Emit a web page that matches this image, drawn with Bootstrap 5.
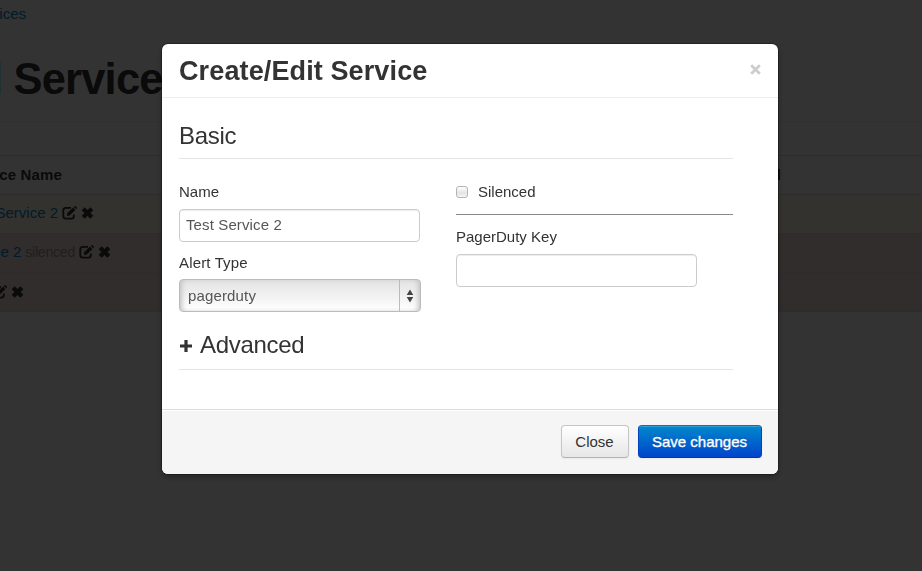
<!DOCTYPE html>
<html lang="en">
<head>
<meta charset="utf-8">
<meta name="viewport" content="width=device-width, initial-scale=1">
<title>Services</title>
<link href="https://cdn.jsdelivr.net/npm/bootstrap@5.3.0/dist/css/bootstrap.min.css" rel="stylesheet">
<style>
body{font-family:"Liberation Sans",Arial,sans-serif;font-size:15px;line-height:22px;color:#333;background:#fff;overflow:hidden}
.page{height:571px;overflow:hidden}
.crumb{width:26px;height:29px;padding-top:3px;color:#08c}
.page-title{height:93px;padding-top:24px;border-bottom:1px solid #eee;margin:0 0 33px -51px;font-size:43.5px;line-height:52px;font-weight:700;white-space:pre;letter-spacing:-.8px}
.page-title a,.svc a{color:#08c;text-decoration:none}
.svc-row{height:39px;border-top:1px solid #ddd}
.svc{white-space:nowrap;height:38px}
.raised .svc{height:36px}
.svc svg,.plus{flex:none}
.w-head{width:62px}.w-one{width:94px}.w-two{width:111px}.w-three{width:24px}
.name-head{letter-spacing:.15px}
.col-end{width:719px}
.warn-row{background:#fcf8e3}
.err-row{background:#f2dede}
.quiet{color:#999;font-size:14px;letter-spacing:-.2px}
.modal-backdrop.show{opacity:.8}
.edit-dialog{max-width:616px;width:616px;margin:44px 0 0 162px}
.edit-dialog .modal-content{height:430px;border:0;border-radius:6px;box-shadow:0 3px 7px rgba(0,0,0,.3),0 0 0 1px rgba(0,0,0,.3);color:#333}
.edit-dialog .modal-header{height:54px;padding:0 17px;border-bottom:1px solid #eee}
.edit-dialog .modal-title{font-size:27px;line-height:32px;letter-spacing:.12px}
.shut{border:0;background:none;padding:0;margin:-2px 0 0;color:#ccc}
.edit-dialog .modal-body{padding:22px 45px 0 17px}
.section-title{font-size:24px;line-height:32px;height:39px;border-bottom:1px solid #e5e5e5;margin:0;letter-spacing:-.3px}
.fields{margin-top:22px}
.field-col{width:277px}
.field-label{line-height:22px;height:22px;display:block}
.field-next{margin:10px 0 5px;letter-spacing:.15px}
.key-label{margin-bottom:6px}
.edit-dialog .form-control,.edit-dialog .form-select{width:241px;height:33px;font-size:15px;line-height:22px;padding:4px 6px;border:1px solid #ccc;border-radius:4px;color:#555;box-shadow:inset 0 1px 1px rgba(0,0,0,.075)}
.edit-dialog .name-box{margin-top:6px;padding-bottom:6px;padding-top:3px;letter-spacing:.12px}
.picker{position:relative;width:242px}
.edit-dialog .form-select{width:242px;padding:5px 8px;background:linear-gradient(#e3e3e3,#fff);border-color:#bbb;box-shadow:inset 4px 0 5px -2px #c4c4c4,inset -4px 0 5px -2px #c4c4c4;letter-spacing:.15px}
.picker-arrows{position:absolute;right:0;top:0;height:33px;width:22px;padding-right:2px;border-left:1px solid #bbb;pointer-events:none}
.tick{appearance:none;width:12px;height:12px;margin:0 10px 0 0;border:1px solid #b4b4b4;border-radius:3px;background:linear-gradient(#fff,#e4e4e4 60%,#f6f6f6)}
.rule{height:1px;background:#888;margin:11px 0}
.advanced{margin-top:17px;height:41px}
.advanced .plus{margin:10px 7px 0 0}
.edit-dialog .modal-footer{height:65px;padding:0 16px 2px;gap:9px;background:#f5f5f5;border-top:1px solid #ddd;border-radius:0 0 6px 6px;box-shadow:inset 0 1px 0 #fff}
.edit-dialog .modal-footer .btn{margin:0;height:33px;padding:0 1px 0 0;font-size:15px;line-height:31px;border-radius:4px;box-shadow:inset 0 1px 0 rgba(255,255,255,.2),0 1px 2px rgba(0,0,0,.05)}
.btn-shut{width:68px;color:#333;background:linear-gradient(#fff,#e6e6e6);border:1px solid #c5c5c5;border-bottom-color:#b3b3b3}
.btn-save{width:124px;color:#fff;background:linear-gradient(#08c,#04c);border:1px solid #04c;border-color:#0074c4 #04b #0038a8;-webkit-text-stroke:.35px #fff;text-shadow:0 -1px 0 rgba(0,0,0,.25)}
</style>
</head>
<body>
<svg class="d-none" xmlns="http://www.w3.org/2000/svg">
  <symbol id="edit" viewBox="0 0 14 13"><path d="M8.4 1.7H3.7Q1.2 1.7 1.2 4v5.3q0 2.5 2.5 2.5h5q2.4 0 2.4-2.5V8" fill="none" stroke="currentColor" stroke-width="1.7"/><path d="M4.6 9.3l.3-2.7 5.4-5.2 2.2 2.2-5.3 5.3zM11 .8l.6-.6q.5-.4 1 0l1.2 1.2q.4.5 0 1l-.6.6z" fill="currentColor"/></symbol>
  <symbol id="cross" viewBox="0 0 12 12"><path d="M2 2l8 8M10 2l-8 8" fill="none" stroke="currentColor" stroke-width="3.9"/></symbol>
</svg>
<main class="page">
  <nav class="crumb d-flex justify-content-end"><span>Services</span></nav>
  <h1 class="page-title"><a href="#">All</a> Services</h1>
  <div class="svc-row d-flex fw-bold">
    <div class="svc w-head d-flex justify-content-end align-items-center"><span class="name-head">Service Name</span></div>
    <div class="svc col-end d-flex justify-content-end align-items-center"><span>Disabled</span></div>
  </div>
  <div class="svc-row warn-row raised">
    <div class="svc w-one d-flex justify-content-end align-items-center"><a href="#">Test Service 2</a><svg class="ms-1" width="15" height="14"><use href="#edit"/></svg><svg class="ms-1" width="13" height="14"><use href="#cross"/></svg></div>
  </div>
  <div class="svc-row err-row raised">
    <div class="svc w-two d-flex justify-content-end align-items-center"><a href="#">Service 2</a><span class="quiet ms-1">silenced</span><svg class="ms-1" width="15" height="14"><use href="#edit"/></svg><svg class="ms-1" width="13" height="14"><use href="#cross"/></svg></div>
  </div>
  <div class="svc-row err-row">
    <div class="svc w-three d-flex justify-content-end align-items-center"><svg width="15" height="14"><use href="#edit"/></svg><svg class="ms-1" width="13" height="14"><use href="#cross"/></svg></div>
  </div>
  <div class="svc-row"></div>
</main>

<div class="modal-backdrop show"></div>
<div class="modal d-block" role="dialog" aria-labelledby="editTitle">
  <div class="modal-dialog edit-dialog">
    <div class="modal-content">
      <div class="modal-header">
        <h3 class="modal-title fw-bold" id="editTitle">Create/Edit Service</h3>
        <button class="shut d-flex" aria-label="Close"><svg width="11" height="11" viewBox="0 0 11 11"><path d="M1.2 1.2l8.6 8.6M9.8 1.2L1.2 9.8" stroke="currentColor" stroke-width="2.7"/></svg></button>
      </div>
      <div class="modal-body">
        <h4 class="section-title fw-normal">Basic</h4>
        <div class="fields d-flex">
          <div class="field-col">
            <label class="field-label" for="name">Name</label>
            <input class="form-control name-box" id="name" value="Test Service 2">
            <label class="field-label field-next" for="kind">Alert Type</label>
            <div class="picker">
              <select class="form-select" id="kind"><option>pagerduty</option></select>
              <span class="picker-arrows d-flex align-items-center justify-content-center"><svg width="8" height="14" viewBox="0 0 8 14"><path d="M4 .5l3.3 5.5H.7zM4 13.5L7.3 8H.7z" fill="#444"/></svg></span>
            </div>
          </div>
          <div class="field-col">
            <label class="field-label d-flex align-items-center"><input type="checkbox" class="tick">Silenced</label>
            <div class="rule"></div>
            <label class="field-label key-label" for="key">PagerDuty Key</label>
            <input class="form-control" id="key">
          </div>
        </div>
        <h4 class="section-title advanced fw-normal d-flex"><svg class="plus" width="14" height="14" viewBox="0 0 14 14"><path d="M7 1v12M1 7h12" stroke="#333" stroke-width="3.2"/></svg><span>Advanced</span></h4>
      </div>
      <div class="modal-footer">
        <button class="btn btn-shut">Close</button>
        <button class="btn btn-save">Save changes</button>
      </div>
    </div>
  </div>
</div>
<script src="https://cdn.jsdelivr.net/npm/bootstrap@5.3.0/dist/js/bootstrap.bundle.min.js"></script>
</body>
</html>
